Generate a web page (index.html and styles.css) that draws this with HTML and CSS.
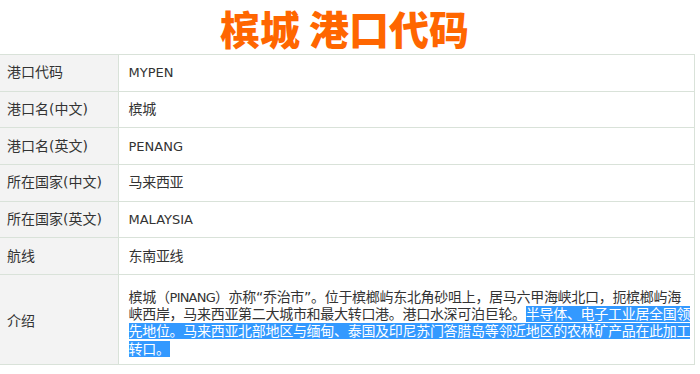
FILE: index.html
```html
<!DOCTYPE html>
<html lang="zh-CN">
<head>
<meta charset="utf-8">
<title>槟城 港口代码</title>
<link rel="stylesheet" href="styles.css">
</head>
<body>
<div class="page">
  <h1 class="title">槟城 港口代码</h1>
  <table class="info">
    <tr><td class="k">港口代码</td><td class="v"><span class="en">MYPEN</span></td></tr>
    <tr><td class="k">港口名(中文)</td><td class="v">槟城</td></tr>
    <tr><td class="k">港口名(英文)</td><td class="v"><span class="en">PENANG</span></td></tr>
    <tr><td class="k">所在国家(中文)</td><td class="v">马来西亚</td></tr>
    <tr><td class="k">所在国家(英文)</td><td class="v"><span class="en">MALAYSIA</span></td></tr>
    <tr><td class="k">航线</td><td class="v">东南亚线</td></tr>
    <tr class="intro"><td class="k">介绍</td><td class="v">槟城（<span class="en">PINANG</span>）亦称“乔治市”。位于槟榔屿东北角砂咀上，居马六甲海峡北口，扼槟榔屿海峡西岸，马来西亚第二大城市和最大转口港。港口水深可泊巨轮。<span class="sel">半导体、电子工业居全国领先地位。马来西亚北部地区与缅甸、泰国及印尼苏门答腊岛等邻近地区的农林矿产品在此加工转口。</span></td></tr>
  </table>
</div>
</body>
</html>
```

FILE: styles.css
```css
html, body {
  margin: 0;
  padding: 0;
  background: #fff;
}
.page {
  width: 695px;
}
.title {
  margin: 0;
  height: 54px;
  padding-right: 6px;
  text-align: center;
  font-family: "Noto Sans CJK SC", sans-serif;
  font-weight: 900;
  font-size: 40px;
  line-height: 56px;
  color: #ff6600;
}
.info {
  width: 695px;
  table-layout: fixed;
  border-collapse: collapse;
  font-family: "DejaVu Sans", "Noto Sans CJK SC", sans-serif;
  font-size: 14px;
  color: #333;
}
.info td {
  border: 1px solid #d9e2d9;
  height: 36.67px;
  padding: 0 10px;
  line-height: 17px;
  vertical-align: middle;
  box-sizing: border-box;
}
.info td.k {
  width: 118px;
  white-space: nowrap;
  background: #f3f3f3;
  border-left: none;
  padding-left: 7px;
  padding-right: 6px;
}
.info td.v {
  padding-left: 10px;
  padding-right: 3px;
  letter-spacing: -0.3px;
}
.info .intro td {
  height: 90px;
  line-height: 17.3px;
}
.info .intro td.k {
  padding-top: 4px;
}
.info .intro td.v {
  padding-top: 8px;
}
.en {
  font-size: 13px;
  letter-spacing: 0;
}
.intro .en {
  letter-spacing: -0.8px;
}
.sel {
  background: #3399ff;
  color: #fff;
}
```
